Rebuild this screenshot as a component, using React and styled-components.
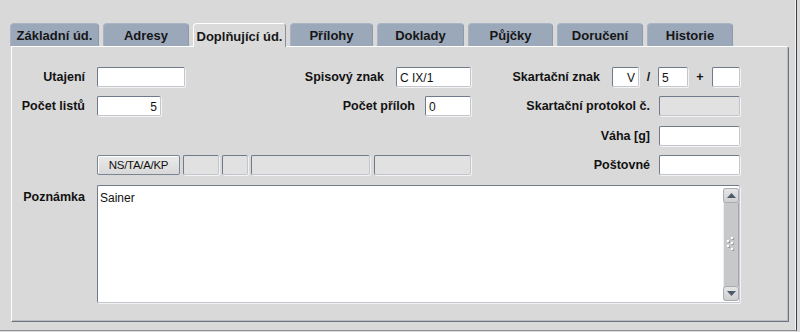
import styled, { createGlobalStyle } from "styled-components";

const GlobalStyle = createGlobalStyle`
  body {
    margin: 0;
    background: #dadada;
    font-family: "Liberation Sans", Arial, sans-serif;
    color: #121212;
  }
`;

const TABS = [
  { label: "Základní úd.", w: 89 },
  { label: "Adresy", w: 86 },
  { label: "Doplňující úd.", w: 93, active: true },
  { label: "Přílohy", w: 83 },
  { label: "Doklady", w: 87 },
  { label: "Půjčky", w: 85 },
  { label: "Doručení", w: 86 },
  { label: "Historie", w: 86 },
];

const GRIP = [
  [6, 2],
  [2, 5],
  [6, 7],
  [2, 10],
  [6, 13],
];

function ScrollBar() {
  return (
    <Scroll>
      <ScrollButton>
        <svg width="9" height="5" viewBox="0 0 9 5">
          <path d="M0 5 L4.5 0 L9 5 Z" fill="#4e5b6e" />
        </svg>
      </ScrollButton>
      <Thumb>
        <svg width="10" height="17" viewBox="0 0 10 17">
          {GRIP.map(([x, y], i) => (
            <g key={i}>
              <circle cx={x + 0.8} cy={y + 0.8} r="1.3" fill="#868b93" />
              <circle cx={x} cy={y} r="1.3" fill="#ffffff" />
            </g>
          ))}
        </svg>
      </Thumb>
      <ScrollButton>
        <svg width="9" height="5" viewBox="0 0 9 5">
          <path d="M0 0 L9 0 L4.5 5 Z" fill="#4e5b6e" />
        </svg>
      </ScrollButton>
    </Scroll>
  );
}

export default function App() {
  return (
    <Window>
      <GlobalStyle />
      <TabBar>
        {TABS.map((t) => (
          <Tab key={t.label} $w={t.w} $active={t.active}>
            {t.label}
          </Tab>
        ))}
      </TabBar>
      <Panel>
        <Form>
          {/* row 1 */}
          <Label>Utajení</Label>
          <Split>
            <Field $w={88} readOnly value="" />
            <Group $gap={12}>
              <Label>Spisový znak</Label>
              <Field $w={75} readOnly value="C IX/1" />
            </Group>
          </Split>
          <Group $gap={0}>
            <Label>Skartační znak</Label>
            <Field $w={27} $ml={12} $right readOnly value="V" />
            <Sep $w={19}>/</Sep>
            <Field $w={30} readOnly value="5" />
            <Sep $w={24}>+</Sep>
            <Field $w={28} readOnly value="" />
          </Group>

          {/* row 2 */}
          <Label>Počet listů</Label>
          <Split>
            <Field $w={64} $right readOnly value="5" />
            <Group $gap={10}>
              <Label>Počet příloh</Label>
              <Field $w={46} readOnly value="0" />
            </Group>
          </Split>
          <Group $gap={9}>
            <Label>Skartační protokol č.</Label>
            <Field $w={81} $disabled readOnly value="" />
          </Group>

          {/* row 3 */}
          <span />
          <span />
          <Group $gap={9}>
            <Label>Váha [g]</Label>
            <Field $w={81} readOnly value="" />
          </Group>

          {/* row 4 */}
          <span />
          <Strip>
            <CodeButton>NS/TA/A/KP</CodeButton>
            <Field $w={36} $disabled readOnly value="" />
            <Field $w={26} $disabled readOnly value="" />
            <Field $w={119} $disabled readOnly value="" />
            <Field $grow $ml={1} $disabled readOnly value="" />
          </Strip>
          <Group $gap={9}>
            <Label>Poštovné</Label>
            <Field $w={81} readOnly value="" />
          </Group>

          {/* row 5 */}
          <NoteLabel>Poznámka</NoteLabel>
          <NoteBox>
            <NoteText>Sainer</NoteText>
            <ScrollBar />
          </NoteBox>
        </Form>
      </Panel>
    </Window>
  );
}

const Window = styled.div`
  width: 797px;
  height: 331px;
  box-sizing: border-box;
  border-right: 1px solid #3e4349;
  border-bottom: 1px solid #8c9096;
  box-shadow: inset -1px 0 0 #f2f2f2;
  background: #d9d9d9;
`;

const TabBar = styled.div`
  display: flex;
  gap: 4px;
  padding: 23px 0 0 10px;
  position: relative;
  z-index: 1;
`;

const Tab = styled.div`
  width: ${(p) => p.$w}px;
  height: ${(p) => (p.$active ? 24 : 23)}px;
  box-sizing: border-box;
  display: flex;
  align-items: center;
  justify-content: center;
  padding-top: 1px;
  font-size: 13px;
  font-weight: bold;
  color: #161616;
  border-radius: 4px 4px 0 0;
  background: ${(p) => (p.$active ? "#dadada" : "#9ba8ba")};
  border: 1px solid ${(p) => (p.$active ? "#ffffff" : "#a9b4c4")};
  border-right-color: ${(p) => (p.$active ? "#8a9099" : "#8e9aab")};
  border-bottom: none;
  margin-bottom: ${(p) => (p.$active ? -1 : 0)}px;
`;

const Panel = styled.div`
  margin-left: 11px;
  width: 778px;
  height: 276px;
  box-sizing: border-box;
  border: 1px solid #ffffff;
  border-right-color: #6d7480;
  border-bottom-color: #6d7480;
  border-radius: 0 3px 0 0;
  box-shadow: inset -1px -1px 0 #b9bcc1;
  padding-top: 20px;
`;

const Form = styled.div`
  display: grid;
  grid-template-columns: 73px 374px 257px;
  grid-template-rows: 20px 20px 21px 20px 118px;
  column-gap: 12px;
  row-gap: 9px;
  align-items: center;
`;

const Label = styled.span`
  font-size: 12.5px;
  font-weight: bold;
  text-align: right;
  white-space: nowrap;
`;

const NoteLabel = styled(Label)`
  align-self: start;
  margin-top: 6px;
`;

const Split = styled.div`
  display: flex;
  justify-content: space-between;
  align-items: center;
`;

const Group = styled.div`
  display: flex;
  justify-content: flex-end;
  align-items: center;
  gap: ${(p) => p.$gap}px;
`;

const Strip = styled.div`
  display: flex;
  align-items: center;
  gap: 3px;
`;

const Field = styled.input`
  width: ${(p) => (p.$grow ? "auto" : `${p.$w}px`)};
  flex: ${(p) => (p.$grow ? 1 : "none")};
  min-width: 0;
  height: 20px;
  box-sizing: border-box;
  margin: 0 0 0 ${(p) => p.$ml || 0}px;
  padding: 1px 3px 0;
  border: 1px solid;
  border-color: #6f7a8b #c3c7cd #c3c7cd #6f7a8b;
  border-radius: 2px;
  box-shadow: 1px 1px 0 #f3f3f3;
  background: ${(p) => (p.$disabled ? "#e1e1e1" : "#ffffff")};
  font-family: "Liberation Sans", Arial, sans-serif;
  font-size: 12px;
  color: #111;
  text-align: ${(p) => (p.$right ? "right" : "left")};
  outline: none;
`;

const Sep = styled.span`
  width: ${(p) => p.$w}px;
  text-align: center;
  font-size: 12.5px;
  font-weight: bold;
`;

const CodeButton = styled.div`
  width: 83px;
  height: 20px;
  box-sizing: border-box;
  display: flex;
  align-items: center;
  justify-content: center;
  border: 1px solid #7b8594;
  border-radius: 2px;
  background: linear-gradient(#eaeaea, #d8d8d8);
  box-shadow: inset 1px 1px 0 #ffffff;
  font-size: 11.5px;
  letter-spacing: -0.3px;
  color: #111;
`;

const NoteBox = styled.div`
  grid-column: 2 / 4;
  align-self: stretch;
  display: flex;
  margin-top: 1px;
  margin-bottom: -1px;
  box-sizing: border-box;
  border: 1px solid;
  border-color: #6f7a8b #c3c7cd #c3c7cd #6f7a8b;
  border-radius: 2px;
  background: #ffffff;
  box-shadow: 1px 1px 0 #f3f3f3;
`;

const NoteText = styled.div`
  flex: 1;
  padding: 5px 2px;
  font-size: 12px;
  color: #111;
`;

const Scroll = styled.div`
  width: 16px;
  margin: 2px 0 1px;
  display: flex;
  flex-direction: column;
  border-radius: 3px;
  background: #c9cbcd;
  box-shadow: inset 1px 0 0 #e8e8e8;
`;

const ScrollButton = styled.div`
  height: 15px;
  display: flex;
  align-items: center;
  justify-content: center;
  background: linear-gradient(#e6e6e6, #cfcfcf);
  border: 1px solid #a9adb3;
  border-radius: 3px;
  box-sizing: border-box;
`;

const Thumb = styled.div`
  flex: 1;
  display: flex;
  align-items: center;
  justify-content: center;
  background: #c6c8ca;
  border-left: 1px solid #eeeeee;
  border-right: 1px solid #a4a8ae;
`;
